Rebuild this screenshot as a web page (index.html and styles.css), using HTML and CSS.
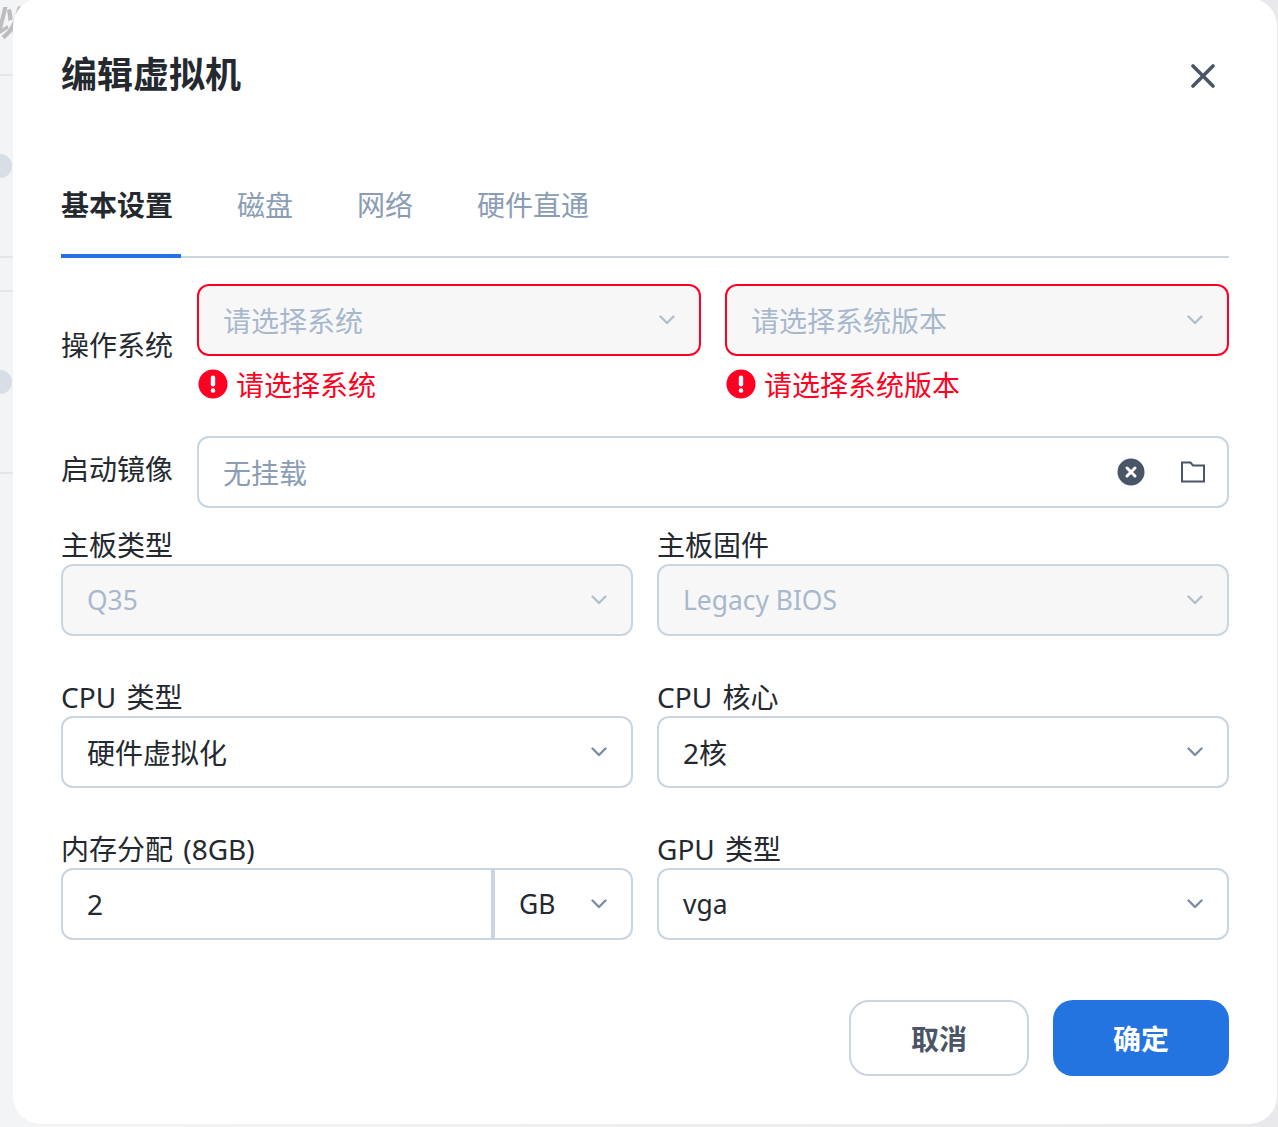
FILE: index.html
```html
<!DOCTYPE html>
<html lang="zh-CN">
<head>
<meta charset="utf-8">
<title>编辑虚拟机</title>
<link rel="stylesheet" href="styles.css">
</head>
<body>
<div class="backdrop" aria-hidden="true">
  <span class="bg-text">虚拟</span>
  <span class="bg-line l1"></span><span class="bg-line l2"></span><span class="bg-line l3"></span><span class="bg-line l4"></span>
  <span class="bg-dot d1"></span><span class="bg-dot d2"></span>
</div>
<main class="modal">
  <header class="modal-head">
    <h1 class="modal-title">编辑虚拟机</h1>
    <button class="close" aria-label="关闭">
      <svg width="24" height="24" viewBox="0 0 24 24"><path d="M2 2 22 22M22 2 2 22" class="stroke-close"/></svg>
    </button>
  </header>
  <nav class="tabs">
    <span class="tab active">基本设置</span>
    <span class="tab">磁盘</span>
    <span class="tab">网络</span>
    <span class="tab">硬件直通</span>
  </nav>
  <section class="row os-row">
    <div class="row-label">操作系统</div>
    <div class="os-grid">
      <div>
        <div class="control invalid disabled"><span class="cjk placeholder-light">请选择系统</span><svg class="chev" width="16" height="10" viewBox="0 0 16 10"><path d="M1.5 1.5 8 8l6.5-6.5"/></svg></div>
        <div class="error"><svg width="30" height="30" viewBox="0 0 30 30"><circle cx="15" cy="15" r="14.5" fill="#ff0022"/><rect x="12.8" y="6.5" width="4.4" height="11" rx="2" fill="#fff"/><circle cx="15" cy="21.5" r="2.3" fill="#fff"/></svg><span class="error-text">请选择系统</span></div>
      </div>
      <div>
        <div class="control invalid disabled"><span class="cjk placeholder-light">请选择系统版本</span><svg class="chev" width="16" height="10" viewBox="0 0 16 10"><path d="M1.5 1.5 8 8l6.5-6.5"/></svg></div>
        <div class="error"><svg width="30" height="30" viewBox="0 0 30 30"><circle cx="15" cy="15" r="14.5" fill="#ff0022"/><rect x="12.8" y="6.5" width="4.4" height="11" rx="2" fill="#fff"/><circle cx="15" cy="21.5" r="2.3" fill="#fff"/></svg><span class="error-text">请选择系统版本</span></div>
      </div>
    </div>
  </section>
  <section class="row iso-row">
    <div class="row-label">启动镜像</div>
    <div class="control iso">
      <span class="cjk placeholder">无挂载</span>
      <svg class="iso-clear" width="28" height="28" viewBox="0 0 28 28"><circle cx="14" cy="14" r="13.5" fill="#4a5568"/><path d="M10 10l8 8M18 10l-8 8" stroke="#fff" stroke-width="3" stroke-linecap="round"/></svg>
      <svg class="iso-folder" width="24" height="22" viewBox="0 0 24 22"><path d="M1 20.500V1.500h8.500l2.500 3h11v16z" fill="none" stroke="#4a5568" stroke-width="2"/></svg>
    </div>
  </section>
  <section class="form-grid">
    <div class="field">
      <label class="field-label">主板类型</label>
      <div class="control disabled"><span class="latin placeholder-light">Q35</span><svg class="chev" width="16" height="10" viewBox="0 0 16 10"><path d="M1.5 1.500 8 8l6.500-6.500"/></svg></div>
    </div>
    <div class="field">
      <label class="field-label">主板固件</label>
      <div class="control disabled"><span class="latin placeholder-light">Legacy BIOS</span><svg class="chev" width="16" height="10" viewBox="0 0 16 10"><path d="M1.5 1.500 8 8l6.500-6.500"/></svg></div>
    </div>
    <div class="field">
      <label class="field-label">CPU 类型</label>
      <div class="control"><span class="cjk">硬件虚拟化</span><svg class="chev dark" width="16" height="10" viewBox="0 0 16 10"><path d="M1.5 1.500 8 8l6.500-6.500"/></svg></div>
    </div>
    <div class="field">
      <label class="field-label">CPU 核心</label>
      <div class="control"><span class="cjk">2核</span><svg class="chev dark" width="16" height="10" viewBox="0 0 16 10"><path d="M1.5 1.500 8 8l6.500-6.500"/></svg></div>
    </div>
    <div class="field">
      <label class="field-label">内存分配 (8GB)</label>
      <div class="control split">
        <span class="split-value">2</span>
        <span class="split-unit"><span class="latin">GB</span><svg class="chev dark" width="16" height="10" viewBox="0 0 16 10"><path d="M1.5 1.500 8 8l6.500-6.500"/></svg></span>
      </div>
    </div>
    <div class="field">
      <label class="field-label">GPU 类型</label>
      <div class="control"><span class="latin">vga</span><svg class="chev dark" width="16" height="10" viewBox="0 0 16 10"><path d="M1.5 1.500 8 8l6.500-6.500"/></svg></div>
    </div>
  </section>
  <footer class="actions">
    <button class="btn btn-cancel">取消</button>
    <button class="btn btn-ok">确定</button>
  </footer>
</main>
</body>
</html>
```
FILE: styles.css
```css
* { box-sizing: border-box; }
html, body { margin: 0; height: 100%; }
body {
  position: relative;
  height: 1127px;
  overflow: hidden;
  background: #e9e9ea;
  font-family: "Noto Sans", "Noto Sans CJK SC", sans-serif;
  font-size: 28px;
  color: #24292f;
}
.backdrop {
  position: absolute;
  left: 0; top: 0;
  width: 100%;
  height: 100%;
  overflow: hidden;
  background: linear-gradient(90deg, #f3f4f5, #e9e9eb);
}
.bg-text { position: absolute; left: -54px; top: -6px; font-size: 36px; font-weight: 700; font-style: italic; color: #bdbdbf; white-space: nowrap; filter: blur(0.6px); }
.bg-line { position: absolute; left: 0; width: 13px; height: 2px; background: #e3e5ea; }
.l1 { top: 74px; } .l2 { top: 256px; } .l3 { top: 290px; } .l4 { top: 472px; }
.bg-dot { position: absolute; left: -12px; width: 24px; height: 24px; border-radius: 50%; background: #d8dee6; }
.d1 { top: 154px; } .d2 { top: 370px; }

.modal {
  position: absolute;
  left: 13px; top: -2px;
  width: 1264px;
  height: 1126px;
  padding: 0 48px;
  background: #fff;
  border-radius: 28px;
  display: flex;
  flex-direction: column;
}
.modal-head {
  display: flex;
  align-items: center;
  justify-content: space-between;
  height: 56px;
  margin-top: 49px;
}
.modal-title { margin: 0; font-size: 36px; line-height: 50px; font-weight: 700; color: #24292f; }
.close { width: 24px; height: 24px; padding: 0; margin-right: 14px; margin-top: 2px; border: 0; background: none; display: flex; }
.stroke-close { fill: none; stroke: #4a5568; stroke-width: 3.600; stroke-linecap: round; }

.tabs {
  display: flex;
  gap: 56px;
  margin-top: 53px;
  height: 102px;
  padding-top: 22px;
  border-bottom: 2px solid #cbd5e0;
}
.tab { height: 80px; padding-right: 8px; padding-top: 1px; line-height: 52px; color: #8a9db5; }
.tab.active { font-weight: 700; color: #24292f; border-bottom: 4px solid #2374e1; }

.row { display: flex; gap: 24px; }
.os-row { margin-top: 26px; }
.row-label { width: 112px; flex: none; line-height: 40px; color: #24292f; }
.os-row .row-label { padding-top: 41px; }
.os-grid { flex: 1; display: grid; grid-template-columns: 1fr 1fr; gap: 24px; }
.control {
  display: flex;
  align-items: center;
  justify-content: space-between;
  height: 72px;
  padding: 0 24px;
  border: 2px solid #cbd5e0;
  border-radius: 12px;
  background: #fff;
  line-height: 40px;
  color: #24292f;
}
.cjk { padding-top: 2px; }
.latin { font-size: 26.4px; }
.control.disabled { background: #f7f7f8; }
.control.invalid { border-color: #ff0022; }
.placeholder-light { color: #a8b8cc; }
.placeholder { color: #8a9db5; }
.chev { flex: none; fill: none; stroke: #b2bfd0; stroke-width: 2.400; stroke-linecap: round; stroke-linejoin: round; margin-top: -1px; }
.chev.dark { stroke: #7a8ea8; }
.error { display: flex; align-items: center; gap: 8px; height: 30px; margin-top: 13px; margin-left: 1px; color: #ff0022; line-height: 30px; }
.error svg { flex: none; }
.error-text { padding-top: 2px; }

.iso-row { margin-top: 37px; align-items: center; }
.iso-row .row-label { margin-top: -6px; }
.iso { flex: 1; justify-content: flex-start; }
.iso-clear { margin-left: auto; margin-top: 0; }
.iso-folder { margin-left: 36px; margin-top: 0; margin-right: -2px; }

.form-grid { display: grid; grid-template-columns: 1fr 1fr; column-gap: 24px; row-gap: 44px; margin-top: 20px; }
.field-label { display: block; height: 36px; line-height: 34px; color: #24292f; word-spacing: 3px; }
.split { padding: 0; }
.split-value { flex: 1; padding-left: 24px; }
.split-unit { width: 140px; height: 100%; padding: 0 24px; display: flex; align-items: center; justify-content: space-between; border-left: 4px solid #cbd5e0; }

.actions { display: flex; justify-content: flex-end; gap: 24px; margin-top: 60px; }
.btn { height: 76px; border-radius: 20px; font: 700 28px/40px "Noto Sans", "Noto Sans CJK SC", sans-serif; padding: 2px 0 0; }
.btn-cancel { width: 180px; background: #fff; border: 2px solid #cbd5e0; color: #4a5568; }
.btn-ok { width: 176px; background: #2374e1; border: 0; color: #fff; }
```
